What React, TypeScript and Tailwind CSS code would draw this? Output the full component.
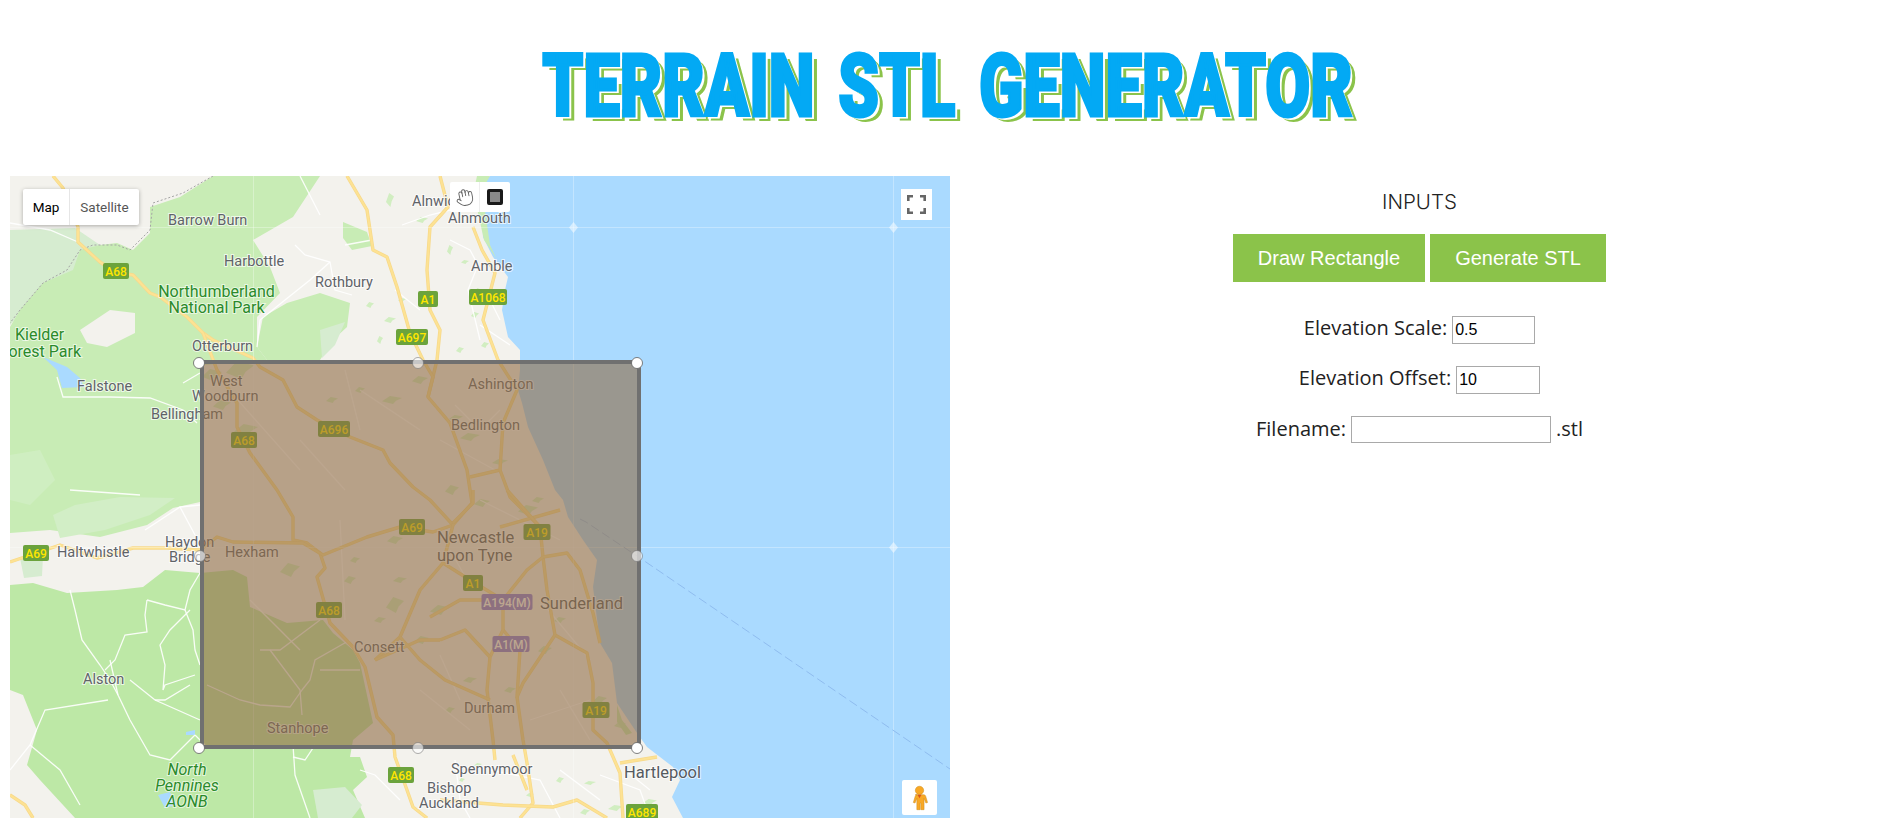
import React from "react";
import { Hand } from "lucide-react";

const toPts = (a: number[]) => {
  const out: string[] = [];
  for (let i = 0; i < a.length; i += 2) out.push(`${a[i]},${a[i + 1]}`);
  return out.join(" ");
};

const LAND = "#f3f2ed";
const SEA = "#aadaff";
const PARK = "#bde8a6";
const PARK2 = "#c8ecb5";
const PALE = "#d6ecd0";

const landShape = [10,176,490,176,478,190,482,213,483,237,493,257,508,277,505,290,502,310,508,337,520,350,520,370,518,390,522,403,528,427,543,460,555,490,563,500,568,517,583,540,597,560,593,587,600,643,612,663,617,703,637,733,647,747,673,767,680,780,672,797,683,818,10,818];

const parks: { p: number[]; c: string }[] = [
  { c: PALE, p: [10,230,75,228,100,245,80,270,40,290,10,325] },
  { c: PARK2, p: [10,327,20,310,43,283,73,270,80,250,100,245,117,243,133,250,150,233,150,207,180,197,213,176,320,176,293,217,253,240,270,267,280,293,257,317,257,347,267,360,240,362,203,365,200,502,173,508,147,525,100,537,50,530,10,533] },
  { c: LAND, p: [80,330,110,310,135,313,135,333,107,347,87,343] },
  { c: PARK2, p: [257,347,263,317,287,303,320,293,350,303,347,327,333,340,320,360,267,360] },
  { c: PALE, p: [320,330,345,322,335,345,322,358] },
  { c: "#cfeec1", p: [10,455,40,450,55,480,30,505,10,500] },
  { c: PALE, p: [20,558,43,556,42,576,24,578] },
  { c: "#d2eec6", p: [53,515,75,505,120,497,175,498,150,515,105,530,60,538] },
  { c: PARK2, p: [343,222,367,232,372,246,352,250,343,238] },
  { c: PARK, p: [10,585,33,583,67,593,117,590,143,587,165,570,200,573,233,570,247,577,250,607,287,623,323,620,333,633,353,650,360,663,373,723,353,740,350,757,360,757,367,777,353,790,365,818,75,818,40,780,27,765,37,730,23,695,10,690] },
  { c: PALE, p: [313,790,345,787,362,805,352,818,318,818] },
  { c: PARK2, p: [477,176,490,176,482,190,490,245,496,258,484,240,478,213,474,190] },
  { c: PARK2, p: [617,705,622,720,632,733,626,735,617,722] },
];

const flecks = [
  [212,375,10,6],[240,370,14,9],[222,405,9,5],[246,430,12,6],[420,380,8,4],[392,400,10,4],[360,390,5,3],[332,400,6,3],[456,418,7,3],[470,437,10,4],[500,462,8,3],[452,490,7,5],[482,503,8,4],[528,510,10,5],[538,500,6,3],[290,570,10,7],[350,580,6,4],[400,580,7,3],[440,610,10,5],[395,605,9,8],[422,640,7,4],[380,620,6,3],[545,650,7,4],[560,620,6,3],[600,700,7,4],[620,725,6,3],[510,690,6,3],[470,680,7,3],[450,710,5,3],[395,540,8,4],[355,560,5,3],[465,262,4,2],[450,250,3,5],[475,315,4,3],[478,292,4,4],[402,300,4,2],[370,305,4,3],[390,320,6,3],[380,340,3,4],[422,220,6,3],[390,200,4,7],[460,350,4,3],[485,345,4,3],[560,780,4,3],[590,783,6,2],[616,808,8,3],[478,765,4,2],[462,780,3,2],[530,795,4,2],[585,812,5,3],[650,802,7,3],[440,790,3,2],
];
const fleckShape = (f: number[]) => {
  const [x, y, a, b] = f;
  return `${x - a},${y + b * 0.3} ${x - a * 0.2},${y - b} ${x + a},${y - b * 0.5} ${x + a * 0.4},${y + b * 0.2} ${x + a * 0.1},${y + b}`;
};

const yellowRoads: number[][] = [
  [53,176,63,188,78,227,78,242,100,262,115,272,133,275,150,293,160,297,187,317,203,333,213,340,253,358,260,367,283,380,297,407,317,420,350,437,383,450,390,463,413,487,430,500,453,525],
  [203,333,217,370,237,403,237,427,250,453,277,490,293,517,293,540,307,543,320,553,325,568,317,577,330,623,353,647,365,667,377,717,393,735,395,757,407,790,413,807,427,818],
  [10,562,60,545,97,558,133,548,167,548,200,550,217,537,233,542,303,543,323,555,367,537,400,527,433,532,453,525],
  [440,176,448,207,430,227,427,270,430,310,440,330,437,360,428,397,450,423,467,470,472,503,453,525,443,563,420,590,400,637,375,660],
  [347,176,367,210,373,250,387,257,397,287,410,333,423,360,433,377,428,397],
  [473,227,482,250,495,273,483,320,498,360,517,390,503,423,500,470,470,477],
  [500,470,510,497,540,527,543,557,547,590,555,635,587,653,593,683,593,730,607,743,620,773,623,818],
  [473,490,473,503,453,523],[500,527,560,510],[507,490,540,527],
  [543,557,567,553,580,570,593,613,600,643],
  [555,635,523,683,517,697,520,650,503,630],[503,600,503,630,490,657,487,690,493,740,495,760],
  [517,697,523,740,527,763,533,803,520,818],
  [503,600,527,570,543,557],[443,563,470,580,503,600],
  [440,800,503,805,553,807,577,800,607,818],
  [620,763,657,757],[440,640,465,630,490,657],[375,660,420,640,440,640],[430,617,460,600,503,600],
  [400,637,420,660,445,680,490,700],[513,755,527,790],[10,795,25,805,33,818],
];

const whiteRoads: number[][] = [
  [10,223,50,230,78,242],[57,377,63,397,83,397,110,397,150,398,183,410,197,423],[183,383,200,373],
  [295,245,305,255,330,262,335,290,352,295],[257,347,260,320,285,300,310,280,330,262],[395,290,420,310],[345,245,372,240],
  [70,490,140,495],[145,530,180,507,200,505],[180,507,195,535],
  [70,590,75,610,82,640,100,665,110,680,118,695],[147,600,145,615,147,632,125,635,115,660,105,670],
  [147,600,165,605,185,610,190,590,200,573],[190,610,170,630,160,645,165,665,163,690,165,685,195,675],[185,610,193,630,195,650,200,665],
  [110,660,118,695,130,720,150,755,170,760,195,735],[108,700,45,710,30,745,10,770],[130,680,155,700,200,720],
  [155,700,165,700,190,685],[195,735,205,745],[30,745,60,770,80,805],[293,745,295,775,310,818],[293,757,305,760,315,745],
  [440,655,460,700],[360,770,375,775,400,800],[455,760,460,800,470,818],[490,770,540,780,560,818],[560,770,600,800],[600,775,640,790,650,818],[625,770,650,790],
  [220,380,300,470],[360,390,420,430],[300,440,345,490],[345,370,360,430],[455,405,480,430,500,410],[440,440,495,470],[480,500,560,540],[340,520,345,620],[250,600,300,650],[270,650,300,690,302,715],[207,685,240,700,260,705,290,707,302,690],[302,690,310,680,315,660,350,640],[320,670,360,670],[260,650,280,650,320,620],[450,550,470,585],[540,600,590,660],[530,720,590,700],[420,690,470,730],[560,690,590,740],
  [402,225,430,215,470,205],[450,240,470,250,478,265,468,290,480,340],[485,290,500,320],[480,325,510,345],[300,176,320,215],
];

const border = [213,176,183,193,153,203,150,230,130,250,117,245,93,245,80,250,67,270,43,283,20,310,10,323];

const labels: [string, number, number][] = [
  ["Barrow Burn",168,225],["Harbottle",224,266],["Rothbury",315,287],["Otterburn",192,351],["Falstone",77,391],
  ["West",210,386],["Woodburn",192,401],["Bellingham",151,419],["Alnwick",412,206],["Alnmouth",448,223],["Amble",471,271],
  ["Ashington",468,389],["Bedlington",451,430],["Hexham",225,557],["Haydon",165,547],["Bridge",169,562],["Haltwhistle",57,557],
  ["Consett",354,652],["Durham",464,713],["Stanhope",267,733],["Alston",83,684],["Spennymoor",451,774],["Bishop",427,793],["Auckland",419,808],
];
const bigLabels: [string, number, number][] = [["Newcastle",437,543],["upon Tyne",437,561],["Sunderland",540,609],["Hartlepool",624,778]];

const shields: [string, number, number, number, boolean?][] = [
  ["A68",116,271,26],["A1",428,299,20],["A1068",488,297,38],["A697",412,337,32],["A696",334,429,32],["A68",244,440,26],["A69",412,527,26],["A69",36,553,26],["A68",329,610,26],["A1",473,583,20],["A19",537,532,27],["A194(M)",507,602,51,true],["A1(M)",511,644,37,true],["A19",596,710,27],["A68",401,775,26],["A689",642,812,32],
];

function MapDrawing() {
  return (
    <svg viewBox="10 176 940 642" width={940} height={642} className="block">
      <rect x={10} y={176} width={940} height={642} fill={SEA} />
      <polygon points={toPts(landShape)} fill={LAND} />
      {parks.map((s, i) => <polygon key={i} points={toPts(s.p)} fill={s.c} />)}
      {flecks.map((f, i) => <polygon key={i} points={fleckShape(f)} fill={PARK2} fillOpacity={0.8} />)}
      <polygon points="43,357 67,367 80,378 84,387 62,388 57,370" fill={SEA} />
      <polygon points="158,795 170,792 176,805 165,808" fill={SEA} />
      <polygon points="186,732 195,730 195,735 186,735" fill={SEA} />
      <polyline points={toPts(border)} fill="none" stroke="#a5a5a5" strokeWidth={1} strokeDasharray="2 2" />
      {whiteRoads.map((r, i) => <polyline key={i} points={toPts(r)} fill="none" stroke="#ffffff" strokeWidth={1.3} strokeOpacity={0.9} />)}
      {yellowRoads.map((r, i) => (
        <g key={i}>
          <polyline points={toPts(r)} fill="none" stroke="#f7d98a" strokeWidth={3.4} strokeLinejoin="round" />
          <polyline points={toPts(r)} fill="none" stroke="#fde293" strokeWidth={2} strokeLinejoin="round" />
        </g>
      ))}
      <g stroke="#ffffff" strokeOpacity={0.3} strokeWidth={1}>
        <line x1={10} y1={227.5} x2={950} y2={227.5} />
        <line x1={10} y1={547.5} x2={950} y2={547.5} />
        <line x1={253.5} y1={176} x2={253.5} y2={818} />
        <line x1={573.5} y1={176} x2={573.5} y2={818} />
        <line x1={893.5} y1={176} x2={893.5} y2={818} />
      </g>
      <g fill="#ffffff" fillOpacity={0.5}>
        <polygon points="573.5,222 578,227.5 573.5,233 569,227.5" />
        <polygon points="893.5,222 898,227.5 893.5,233 889,227.5" />
        <polygon points="893.5,542 898,547.5 893.5,553 889,547.5" />
      </g>
      <polyline points="580,519 586,522 640,558 950,769" fill="none" stroke="#8fbcef" strokeWidth={1} strokeDasharray="9 4" />

      <g fontFamily="Roboto, sans-serif" fontSize={14.5} fill="#5f6368" stroke="#ffffff" strokeOpacity={0.7} strokeWidth={2} style={{ paintOrder: "stroke" }}>
        {labels.map((l, i) => <text key={i} x={l[1]} y={l[2]}>{l[0]}</text>)}
      </g>
      <g fontFamily="Roboto, sans-serif" fontSize={16.5} fill="#555a5f" stroke="#ffffff" strokeOpacity={0.7} strokeWidth={2} style={{ paintOrder: "stroke" }}>
        {bigLabels.map((l, i) => <text key={i} x={l[1]} y={l[2]}>{l[0]}</text>)}
      </g>
      <g fontFamily="Roboto, sans-serif" fontSize={16} fill="#2b8a2b" stroke="#ffffff" strokeOpacity={0.6} strokeWidth={2} style={{ paintOrder: "stroke" }}>
        <text x={216.5} y={297} textAnchor="middle">Northumberland</text>
        <text x={216.5} y={313} textAnchor="middle">National Park</text>
        <text x={15} y={340}>Kielder</text>
        <text x={81} y={357} textAnchor="end">Forest Park</text>
        <g fontStyle="italic">
          <text x={187} y={775} textAnchor="middle">North</text>
          <text x={187} y={791} textAnchor="middle">Pennines</text>
          <text x={187} y={807} textAnchor="middle">AONB</text>
        </g>
      </g>
      {shields.map((s, i) => (
        <g key={i}>
          <rect x={s[1] - s[3] / 2} y={s[2] - 8} width={s[3]} height={16} rx={2} fill={s[4] ? "#8a78d8" : "#6ba33c"} />
          <text x={s[1]} y={s[2] + 4.5} textAnchor="middle" fontFamily="Roboto, sans-serif" fontWeight={500} fontSize={12} fill={s[4] ? "#ffffff" : "#ffe600"}>{s[0]}</text>
        </g>
      ))}

      <rect x={202} y={362} width={437} height={385} fill="#8f6b45" fillOpacity={0.6} stroke="#707070" strokeWidth={4} />
      {[[199,363],[637,363],[199,748],[637,748]].map((c, i) => (
        <circle key={i} cx={c[0]} cy={c[1]} r={5.5} fill="#ffffff" stroke="#5f5f5f" strokeWidth={0.8} />
      ))}
      {[[418,363],[637,556],[200,556],[418,748]].map((c, i) => (
        <circle key={i} cx={c[0]} cy={c[1]} r={5.5} fill="#ffffff" fillOpacity={0.6} stroke="#707070" strokeOpacity={0.7} strokeWidth={0.8} />
      ))}
    </svg>
  );
}

function Pegman() {
  return (
    <svg viewBox="0 0 20 26" width={19} height={26}>
      <circle cx={10} cy={5} r={4.4} fill="#f9a825" stroke="#c98a1a" strokeWidth={0.5} />
      <path d="M5.5 9.5 h9 q1.6 0 2 1.6 l2 6.6 -1.8.6 -1.9-5 v12 h-3.4 v-7 h-.8 v7 h-3.4 v-12 l-1.9 5 -1.8-.6 2-6.6 q.4-1.6 2-1.6 z" fill="#f9a825" stroke="#c98a1a" strokeWidth={0.5} />
      <path d="M8 9.6 h4 l-2 3.6 z" fill="#d9541e" />
    </svg>
  );
}

export default function App() {
  return (
    <div className="h-[818px] w-[1894px] overflow-hidden bg-white">
      <div className="flex h-[176px] justify-center overflow-visible">
        <h1 className="mt-[31px] inline-block h-[110px] origin-center scale-x-[0.74] whitespace-nowrap font-['Roboto',sans-serif] text-[88px] leading-[110px] font-black text-[#03a9f4] [word-spacing:10px] [-webkit-text-stroke:3px_#03a9f4] [text-shadow:4px_3px_0_#fff,8px_5px_0_#8bc34a]">
          TERRAIN STL GENERATOR
        </h1>
      </div>
      <div className="flex">
        <div className="relative ml-[10px] h-[642px] w-[940px] overflow-hidden">
          <MapDrawing />
          <div className="absolute top-[13px] left-[13px] flex h-[36px] w-[116px] overflow-hidden rounded-[2px] bg-white font-['Roboto',sans-serif] text-[13.5px] shadow-[0_1px_4px_rgba(0,0,0,0.3)]">
            <div className="flex w-[47px] items-center justify-center border-r border-[#e6e6e6] text-black">Map</div>
            <div className="flex flex-1 items-center justify-center text-[#565656]">Satellite</div>
          </div>
          <div className="absolute top-[6px] left-[440px] flex h-[30px] w-[60px] rounded-[2px] bg-white">
            <div className="flex w-[30px] items-center justify-center border-r border-[#eeeeee]">
              <Hand size={19} strokeWidth={1.2} color="#666666" className="-rotate-12" />
            </div>
            <div className="flex w-[30px] items-center justify-center">
              <div className="h-[16px] w-[16px] rounded-[2px] border-[3px] border-[#1a1a1a] bg-[#8a8a8a]" />
            </div>
          </div>
          <div className="absolute top-[13px] left-[891px] flex h-[31px] w-[31px] items-center justify-center bg-white">
            <svg viewBox="0 0 19 19" width={19} height={19} fill="none" stroke="#666666" strokeWidth={2.6}>
              <path d="M1.3 6 V1.3 H6 M13 1.3 H17.7 V6 M1.3 13 V17.7 H6 M13 17.7 H17.7 V13" />
            </svg>
          </div>
          <div className="absolute top-[604px] left-[892px] flex h-[35px] w-[35px] items-center justify-center rounded-[2px] bg-white">
            <Pegman />
          </div>
        </div>
        <div className="flex-1 pr-[5px] text-center">
          <h2 className="mt-[14px] h-[24px] font-['Inter',sans-serif] text-[20.5px] leading-[24px] font-light text-[#222222]">INPUTS</h2>
          <div className="mt-[20px] flex justify-center gap-[5px] font-['Liberation_Sans',sans-serif] text-[20px] text-white">
            <button className="h-[48px] w-[192px] bg-[#8bc34a]">Draw Rectangle</button>
            <button className="h-[48px] w-[176px] bg-[#8bc34a]">Generate STL</button>
          </div>
          <div className="font-['Open_Sans',sans-serif] text-[20px] text-[#222222]">
            <div className="mt-[34px] flex h-[28px] items-center justify-center gap-[5px]">
              <span className="-translate-y-[2px]">Elevation Scale:</span>
              <input readOnly value="0.5" className="h-[28px] w-[83px] border border-[#a9a9a9] px-[2px] font-['Liberation_Sans',sans-serif] text-[16px] text-black" />
            </div>
            <div className="mt-[22px] flex h-[28px] items-center justify-center gap-[5px]">
              <span className="-translate-y-[2px]">Elevation Offset:</span>
              <input readOnly value="10" className="h-[28px] w-[84px] border border-[#a9a9a9] px-[2px] font-['Liberation_Sans',sans-serif] text-[16px] text-black" />
            </div>
            <div className="mt-[22px] flex h-[27px] items-center justify-center gap-[5px]">
              <span className="-translate-y-[1px]">Filename:</span>
              <input readOnly value="" className="h-[27px] w-[200px] border border-[#a9a9a9] px-[2px] font-['Liberation_Sans',sans-serif] text-[16px] text-black" />
              <span className="-translate-y-[1px]">.stl</span>
            </div>
          </div>
        </div>
      </div>
    </div>
  );
}
